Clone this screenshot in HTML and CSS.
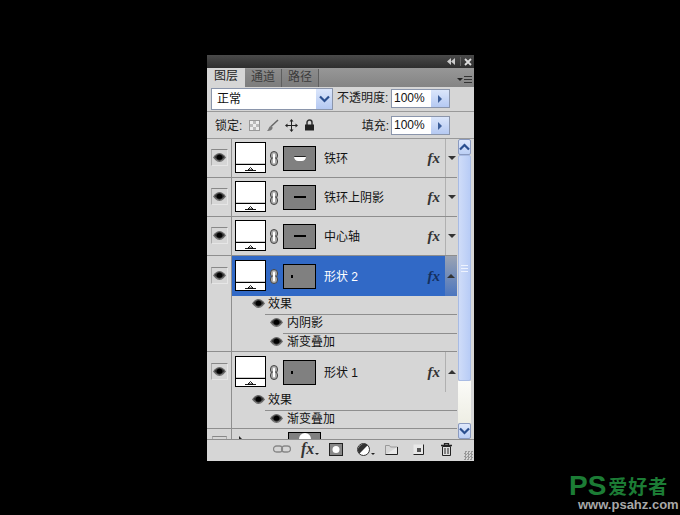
FILE: index.html
```html
<!DOCTYPE html>
<html lang="en">

<head>
    <meta charset="UTF-8">
    <title>图层</title>
    <link rel="stylesheet" href="styles.css">
</head>

<body>
    <svg class="defs" width="0" height="0">
        <symbol id="eye" viewBox="0 0 13 9">
            <path d="M0 4.500C2.500 1 4.500 0 6.500 0s4 1 6.500 4.500C10.500 7.500 8.500 9 6.500 9S2.500 7.500 0 4.500z" fill="#6a6a6a"/>
            <path d="M1.500 4C3.500 2 5 1 6.500 1s3 1 5 3c-2 2-3.500 3.500-5 3.500S3.500 6 1.500 4z" fill="#333"/>
            <ellipse cx="6.500" cy="4.200" rx="2.800" ry="2.500" fill="#000"/>
            <path d="M2.500 7c2.500 1.500 5.500 1.500 8 0-2 1.800-6 1.800-8 0z" fill="#b5b5b5"/>
        </symbol>
        <symbol id="chain" viewBox="0 0 8 15">
            <rect x="0.500" y="0.500" width="7" height="8" rx="3.500" fill="#aaa" stroke="#444"/>
            <rect x="0.500" y="6.500" width="7" height="8" rx="3.500" fill="#aaa" stroke="#444"/>
            <rect x="3" y="2.500" width="2" height="10" rx="1" fill="#fff"/>
        </symbol>
        <symbol id="shape" viewBox="0 0 31 31">
            <rect x="0.500" y="0.500" width="30" height="30" fill="#fff" stroke="#000"/>
            <path d="M1 22.500h29" stroke="#000"/>
            <path d="M1 21.500h29" stroke="#ccc"/>
            <path d="M15.500 25.500l2.500 2.500h-5zM10 28.500h11" fill="#fff" stroke="#000" stroke-width="0.900"/>
        </symbol>
    </svg>

    <div class="panel">
        <div class="title-bar">
            <svg width="8" height="7" viewBox="0 0 8 7"><path d="M4 0v7L0 3.500zM8 0v7L4 3.500z" fill="#ccc"/></svg>
            <span class="title-sep"></span>
            <svg width="8" height="8" viewBox="0 0 8 8"><path d="M1 1l6 6M7 1L1 7" stroke="#ddd" stroke-width="1.800"/></svg>
        </div>

        <div class="tabs">
            <span class="tab active">图层</span>
            <span class="tab">通道</span>
            <span class="tab">路径</span>
            <span class="menu-btn">
                <i class="menu-arrow"></i>
                <i class="menu-lines"></i>
            </span>
        </div>

        <div class="blend-row">
            <div class="select">
                <span class="select-text">正常</span>
                <span class="select-btn">
                    <svg width="11" height="8" viewBox="0 0 11 8"><path d="M1 1.500l4.500 4.500 4.500-4.500" fill="none" stroke="#2b4f8f" stroke-width="2.200"/></svg>
                </span>
            </div>
            <span class="label">不透明度:</span>
            <div class="spin">
                <span class="spin-text">100%</span>
                <span class="spin-btn"><i class="spin-arrow"></i></span>
            </div>
        </div>

        <div class="lock-row">
            <span class="label">锁定:</span>
            <div class="lock-icons">
                <span class="lock-check"></span>
                <svg width="13" height="13" viewBox="0 0 13 13"><path d="M12 1L5 7.500" stroke="#666" stroke-width="1.500"/><path d="M5 7c-2 0-2 3-4 5 3 0 6-1 5.500-4z" fill="#777"/></svg>
                <svg width="13" height="13" viewBox="0 0 13 13"><path d="M6.500 0l2 2.500h-1.500v3.500h3.500v-1.500l2.500 2-2.500 2v-1.500h-3.500v3.500h1.500l-2 2.500-2-2.500h1.500v-3.500h-3.500v1.500l-2.500-2 2.500-2v1.500h3.500v-3.500h-1.500z" fill="#222"/></svg>
                <svg width="11" height="12" viewBox="0 0 11 12"><path d="M3 6V3.500a2.500 2.500 0 0 1 5 0V6" fill="none" stroke="#333" stroke-width="1.500"/><rect x="1" y="5.500" width="9" height="6" fill="#222"/></svg>
            </div>
            <span class="label fill-label">填充:</span>
            <div class="spin">
                <span class="spin-text">100%</span>
                <span class="spin-btn"><i class="spin-arrow"></i></span>
            </div>
        </div>

        <div class="list-wrap">
            <div class="list">
                <div class="layer">
                    <span class="eye-cell"><svg class="eye"><use href="#eye"/></svg></span>
                    <svg class="thumb"><use href="#shape"/></svg>
                    <svg class="chain"><use href="#chain"/></svg>
                    <span class="mask"><i class="mark pill"></i></span>
                    <span class="name">铁环</span>
                    <span class="fx">fx</span>
                    <span class="arrow-cell"><i class="down"></i></span>
                </div>
                <div class="layer">
                    <span class="eye-cell"><svg class="eye"><use href="#eye"/></svg></span>
                    <svg class="thumb"><use href="#shape"/></svg>
                    <svg class="chain"><use href="#chain"/></svg>
                    <span class="mask"><i class="mark dash"></i></span>
                    <span class="name">铁环上阴影</span>
                    <span class="fx">fx</span>
                    <span class="arrow-cell"><i class="down"></i></span>
                </div>
                <div class="layer">
                    <span class="eye-cell"><svg class="eye"><use href="#eye"/></svg></span>
                    <svg class="thumb"><use href="#shape"/></svg>
                    <svg class="chain"><use href="#chain"/></svg>
                    <span class="mask"><i class="mark dash"></i></span>
                    <span class="name">中心轴</span>
                    <span class="fx">fx</span>
                    <span class="arrow-cell"><i class="down"></i></span>
                </div>
                <div class="layer open selected">
                    <span class="eye-cell"><svg class="eye"><use href="#eye"/></svg></span>
                    <svg class="thumb"><use href="#shape"/></svg>
                    <svg class="chain"><use href="#chain"/></svg>
                    <span class="mask"><i class="mark dot"></i></span>
                    <span class="name">形状 2</span>
                    <span class="fx">fx</span>
                    <span class="arrow-cell"><i class="up"></i></span>
                </div>
                <div class="effect head">
                    <svg class="eye"><use href="#eye"/></svg>
                    <span class="effect-name">效果</span>
                </div>
                <div class="effect sub">
                    <svg class="eye"><use href="#eye"/></svg>
                    <span class="effect-name">内阴影</span>
                </div>
                <div class="effect sub last">
                    <svg class="eye"><use href="#eye"/></svg>
                    <span class="effect-name">渐变叠加</span>
                </div>
                <div class="layer open">
                    <span class="eye-cell"><svg class="eye"><use href="#eye"/></svg></span>
                    <svg class="thumb"><use href="#shape"/></svg>
                    <svg class="chain"><use href="#chain"/></svg>
                    <span class="mask"><i class="mark dot"></i></span>
                    <span class="name">形状 1</span>
                    <span class="fx">fx</span>
                    <span class="arrow-cell"><i class="up"></i></span>
                </div>
                <div class="effect head">
                    <svg class="eye"><use href="#eye"/></svg>
                    <span class="effect-name">效果</span>
                </div>
                <div class="effect sub last">
                    <svg class="eye"><use href="#eye"/></svg>
                    <span class="effect-name">渐变叠加</span>
                </div>
                <div class="layer clipped">
                    <span class="eye-cell"><i class="clip-eye"></i></span>
                    <i class="clip-arrow"></i>
                    <span class="clip-thumb"><i class="ball"></i></span>
                </div>
            </div>

            <div class="scrollbar">
                <span class="scroll-btn"><svg width="11" height="8" viewBox="0 0 11 8"><path d="M1 6.500l4.500-4.500 4.500 4.500" fill="none" stroke="#2b4f8f" stroke-width="2.200"/></svg></span>
                <span class="scroll-thumb"><i class="grip"></i></span>
                <span class="scroll-track"></span>
                <span class="scroll-btn"><svg width="11" height="8" viewBox="0 0 11 8"><path d="M1 1.500l4.500 4.500 4.500-4.500" fill="none" stroke="#2b4f8f" stroke-width="2.200"/></svg></span>
            </div>
        </div>

        <div class="footer">
            <span class="slot"><svg width="18" height="8" viewBox="0 0 18 8"><rect x="0.500" y="1" width="9" height="6" rx="3" fill="none" stroke="#888" stroke-width="1.300"/><rect x="8.500" y="1" width="9" height="6" rx="3" fill="none" stroke="#888" stroke-width="1.300"/></svg></span>
            <span class="slot"><span class="fx foot-fx">fx</span><i class="tiny"></i></span>
            <span class="slot"><svg width="14" height="13" viewBox="0 0 14 13"><rect x="0.500" y="0.500" width="13" height="12" fill="#888" stroke="#222"/><circle cx="7" cy="6.500" r="3.500" fill="#fff"/></svg></span>
            <span class="slot">
                <svg width="13" height="13" viewBox="0 0 13 13"><circle cx="6.500" cy="6.500" r="6" fill="#fff" stroke="#333"/><path d="M10.700 2.300A6 6 0 0 0 2.300 10.700z" fill="#333"/></svg>
                <i class="tiny"></i>
            </span>
            <span class="slot"><svg width="13" height="11" viewBox="0 0 13 11"><path d="M0.500 10.500V1.500h4l1 1.500h7" fill="none" stroke="#999"/><path d="M0.500 10.500h12V3" fill="#e8e8e8" stroke="#222"/></svg></span>
            <span class="slot"><svg width="11" height="11" viewBox="0 0 11 11"><rect x="0.500" y="0.500" width="10" height="10" fill="#e8e8e8"/><path d="M0.500 10.500h10V0.500" fill="none" stroke="#222"/><path d="M4 4h4v4H4z" fill="#555"/></svg></span>
            <span class="slot"><svg width="11" height="13" viewBox="0 0 11 13"><path d="M0 2.500h11M3.500 2V0.500h4V2" fill="none" stroke="#222" stroke-width="1.300"/><path d="M1.500 3.500h8v9h-8z" fill="#ddd" stroke="#222"/><path d="M4 5v6M7 5v6" stroke="#222"/></svg></span>
            <span class="resize"></span>
        </div>
    </div>

    <div class="watermark">
        <div class="wm-top">
            <span class="wm-ps">PS</span>
            <span class="wm-cn">爱好者</span>
        </div>
        <div class="wm-url">www.psahz.com</div>
    </div>
</body>

</html>
```

FILE: styles.css
```css
* {
    box-sizing: border-box;
}

html, body {
    height: 100%;
}

body {
    margin: 0;
    background-color: #000;
    overflow: hidden;
    font-family: "Liberation Sans", "Noto Sans CJK SC", sans-serif;
    font-size: 12px;
    color: #111;
}

.defs {
    display: block;
}

.panel {
    width: 267px;
    height: 406px;
    margin: 55px 0 0 207px;
    display: flex;
    flex-direction: column;
    background-color: #d6d6d6;
}

/* title bar */
.title-bar {
    height: 13px;
    display: flex;
    align-items: center;
    justify-content: flex-end;
    background: linear-gradient(#4a4a4a, #2e2e2e);
    padding-right: 2px;
}

.title-sep {
    width: 1px;
    height: 9px;
    background-color: #666;
    margin: 0 3px 0 5px;
}

/* tabs */
.tabs {
    height: 19px;
    display: flex;
    align-items: flex-end;
    background: linear-gradient(#979797, #848484);
}

.tab {
    width: 37px;
    height: 18px;
    line-height: 16px;
    text-align: center;
    color: #3c3c3c;
    border-right: 1px solid #5e5e5e;
    background: linear-gradient(#8c8c8c, #7c7c7c);
}

.tab.active {
    width: 38px;
    height: 19px;
    color: #222;
    background: #d6d6d6;
    border-right: 0;
}

.tab:last-of-type {
    width: 38px;
}

.menu-btn {
    margin-left: auto;
    margin-right: 2px;
    margin-bottom: 4px;
    display: flex;
    align-items: center;
    gap: 1px;
}

.menu-arrow {
    width: 0;
    height: 0;
    border: 3px solid transparent;
    border-top: 3px solid #222;
    border-bottom: 0;
}

.menu-lines {
    width: 8px;
    height: 7px;
    border-top: 1px solid #333;
    border-bottom: 1px solid #333;
    background: linear-gradient(#333, #333) center / 100% 1px no-repeat;
}

/* blend mode and lock rows */
.blend-row, .lock-row {
    display: flex;
    align-items: center;
    padding-right: 24px;
    border-bottom: 1px solid #999;
}

.blend-row {
    height: 25px;
    padding-left: 4px;
}

.lock-row {
    height: 27px;
    padding-left: 8px;
}

.select {
    width: 122px;
    height: 22px;
    display: flex;
    justify-content: space-between;
    background-color: #fff;
    border: 1px solid #8a95ab;
    margin-right: 4px;
}

.select-text {
    padding-left: 5px;
    line-height: 21px;
}

.select-btn {
    width: 16px;
    display: flex;
    align-items: center;
    justify-content: center;
    background: linear-gradient(#dbe6fb, #b5c9f2);
}

.label {
    white-space: nowrap;
    color: #1a1a1a;
    line-height: 16px;
    margin-bottom: 2px;
}

.lock-row .label {
    margin-bottom: 0;
    margin-top: 2px;
}

.spin {
    width: 59px;
    height: 19px;
    display: flex;
    justify-content: space-between;
    margin-left: auto;
    margin-bottom: 1px;
    background-color: #fff;
    border: 1px solid #8a95ab;
}

.lock-row .spin {
    margin-bottom: 0;
    margin-top: 1px;
}

.spin-text {
    padding-left: 2px;
    line-height: 17px;
}

.spin-btn {
    width: 18px;
    display: flex;
    align-items: center;
    justify-content: center;
    background: linear-gradient(#dbe6fb, #b5c9f2);
}

.spin-arrow {
    width: 0;
    height: 0;
    border: 4px solid transparent;
    border-left: 4px solid #3d5f9a;
    border-right: 0;
}

.lock-icons {
    display: flex;
    align-items: center;
    gap: 6px;
    margin-left: 7px;
}

.lock-check {
    width: 11px;
    height: 11px;
    border: 1px solid #999;
    background: repeating-conic-gradient(#bbb 0 25%, #eee 0 50%) 0 0 / 6px 6px;
}

.fill-label {
    margin-left: auto;
}

.fill-label + .spin {
    margin-left: 2px;
}

/* layer list */
.list-wrap {
    height: 300px;
    display: flex;
}

.list {
    width: 250px;
    height: 300px;
    overflow: hidden;
    background: linear-gradient(#8e8e8e, #8e8e8e) 24px 0 / 1px 100% no-repeat;
}

.layer {
    height: 39px;
    display: flex;
    align-items: center;
    border-bottom: 1px solid #8e8e8e;
}

.layer.open {
    height: 40px;
    border-bottom: 0;
}

.eye-cell {
    width: 25px;
    align-self: stretch;
    flex: none;
    display: flex;
    align-items: center;
    justify-content: center;
    border-right: 1px solid #8e8e8e;
}

.eye-cell .eye {
    box-sizing: content-box;
    padding: 3px 1px;
    margin-bottom: 2px;
    border: 1px solid #aaa;
    border-top-color: #888;
    border-right-color: #e6e6e6;
    border-bottom-color: #e6e6e6;
}

.eye {
    width: 13px;
    height: 9px;
    flex: none;
}

.thumb {
    width: 31px;
    height: 31px;
    flex: none;
    margin: 0 0 1px 3px;
}

.chain {
    width: 8px;
    height: 15px;
    flex: none;
    margin-left: 4px;
}

.mask {
    width: 33px;
    height: 25px;
    flex: none;
    margin-left: 5px;
    display: flex;
    align-items: center;
    justify-content: center;
    background-color: #808080;
    border: 1px solid #000;
}

.mark {
    display: block;
}

.pill {
    width: 12px;
    height: 5px;
    background-color: #fff;
    border-top: 1px solid #222;
    border-radius: 1px 1px 5px 5px;
}

.dash {
    width: 12px;
    height: 2px;
    background-color: #000;
}

.dot {
    width: 2px;
    height: 3px;
    margin-right: 16px;
    background-color: #000;
}

.name {
    margin: 0 0 2px 8px;
    flex: 1;
    white-space: nowrap;
}

.fx {
    font-family: "Liberation Serif", serif;
    font-style: italic;
    font-weight: bold;
    font-size: 15px;
    line-height: 14px;
    color: #333;
}

.arrow-cell {
    width: 12px;
    align-self: stretch;
    flex: none;
    margin-left: 5px;
    display: flex;
    align-items: center;
    justify-content: center;
    border-left: 1px solid #b0b0b0;
}

.down, .up {
    width: 0;
    height: 0;
    border: 4px solid transparent;
}

.down {
    border-top: 4px solid #333;
    border-bottom: 0;
}

.up {
    border-bottom: 4px solid #333;
    border-top: 0;
}

.layer.selected {
    background-color: #3169c6;
}

.selected .name {
    color: #fff;
}

.selected .fx {
    color: #14305f;
}

.selected .eye-cell {
    background-color: #d6d6d6;
}

.selected .arrow-cell {
    background: linear-gradient(#9aa3b3, #4c76bf);
    border-left: 0;
}

/* effect rows */
.effect {
    height: 19px;
    display: flex;
    align-items: stretch;
}

.effect .eye {
    margin-top: 3px;
}

.effect.head {
    padding-left: 45px;
}

.effect.sub {
    padding-left: 63px;
}

.effect-name {
    flex: 1;
    padding-left: 3px;
    line-height: 17px;
    border-bottom: 1px solid #8e8e8e;
}

.effect.sub .effect-name {
    padding-left: 4px;
}

.effect.last {
    height: 18px;
    border-bottom: 1px solid #8e8e8e;
}

.effect.last .effect-name {
    border-bottom: 0;
}

/* row cut off by the bottom of the list */
.layer.clipped {
    height: 10px;
    align-items: flex-start;
    border: 0;
    overflow: hidden;
}

.clip-eye {
    width: 15px;
    height: 3px;
    margin-top: 7px;
    border: 1px solid #aaa;
    border-top-color: #888;
    border-bottom: 0;
}

.clip-arrow {
    width: 0;
    height: 0;
    margin: 7px 0 0 7px;
    border: 3px solid transparent;
    border-left: 3px solid #222;
    border-right: 0;
}

.clip-thumb {
    width: 33px;
    height: 24px;
    margin: 3px 0 0 46px;
    display: flex;
    justify-content: center;
    background-color: #808080;
    border: 1px solid #000;
}

.ball {
    width: 12px;
    height: 12px;
    border-radius: 50%;
    background-color: #fff;
}

/* scrollbar */
.scrollbar {
    width: 17px;
    height: 300px;
    display: flex;
    flex-direction: column;
    padding: 0 3px 0 1px;
}

.scroll-btn {
    height: 16px;
    flex: none;
    display: flex;
    align-items: center;
    justify-content: center;
    background: linear-gradient(#dfe8fb, #bccff5);
    border: 1px solid #8a9ac0;
    border-radius: 2px;
}

.scroll-thumb {
    height: 226px;
    flex: none;
    display: flex;
    align-items: center;
    justify-content: center;
    background: linear-gradient(to right, #cfdcf8, #b8ccf6);
    border: 1px solid #a8bbe4;
    border-radius: 2px;
}

.grip {
    width: 7px;
    height: 7px;
    border-top: 1px solid #eef3fe;
    border-bottom: 1px solid #eef3fe;
    background: linear-gradient(#eef3fe, #eef3fe) center / 100% 1px no-repeat;
}

.scroll-track {
    flex: 1;
    background: linear-gradient(#fbfbf8, #eeeee4);
}

/* footer */
.footer {
    height: 22px;
    display: flex;
    align-items: center;
    padding: 0 0 3px 66px;
    border-top: 1px solid #8e8e8e;
    position: relative;
}

.slot {
    width: 28px;
    flex: none;
    display: flex;
    align-items: flex-end;
    gap: 1px;
}

.foot-fx {
    font-size: 16px;
}

.tiny {
    width: 0;
    height: 0;
    margin-bottom: 1px;
    border: 2px solid transparent;
    border-top: 2px solid #222;
    border-bottom: 0;
}

.resize {
    position: absolute;
    right: 1px;
    bottom: 1px;
    width: 9px;
    height: 9px;
    background: repeating-conic-gradient(#999 0 25%, transparent 0 50%) 0 0 / 3px 3px;
}

/* watermark */
.watermark {
    position: absolute;
    left: 569px;
    top: 474px;
    width: 108px;
}

.wm-top {
    display: flex;
    align-items: center;
    height: 24px;
}

.wm-ps, .wm-cn {
    font-weight: bold;
    color: #1c7c35;
    line-height: 24px;
}

.wm-ps {
    font-size: 28px;
    font-family: "Liberation Sans", sans-serif;
}

.wm-cn {
    margin-left: 2px;
    font-family: "Noto Sans CJK SC", sans-serif;
    font-size: 19px;
    letter-spacing: 1px;
}

.wm-url {
    margin-left: 9px;
    font-size: 13px;
    font-weight: bold;
    line-height: 13px;
    color: #a8a8a8;
}
```
